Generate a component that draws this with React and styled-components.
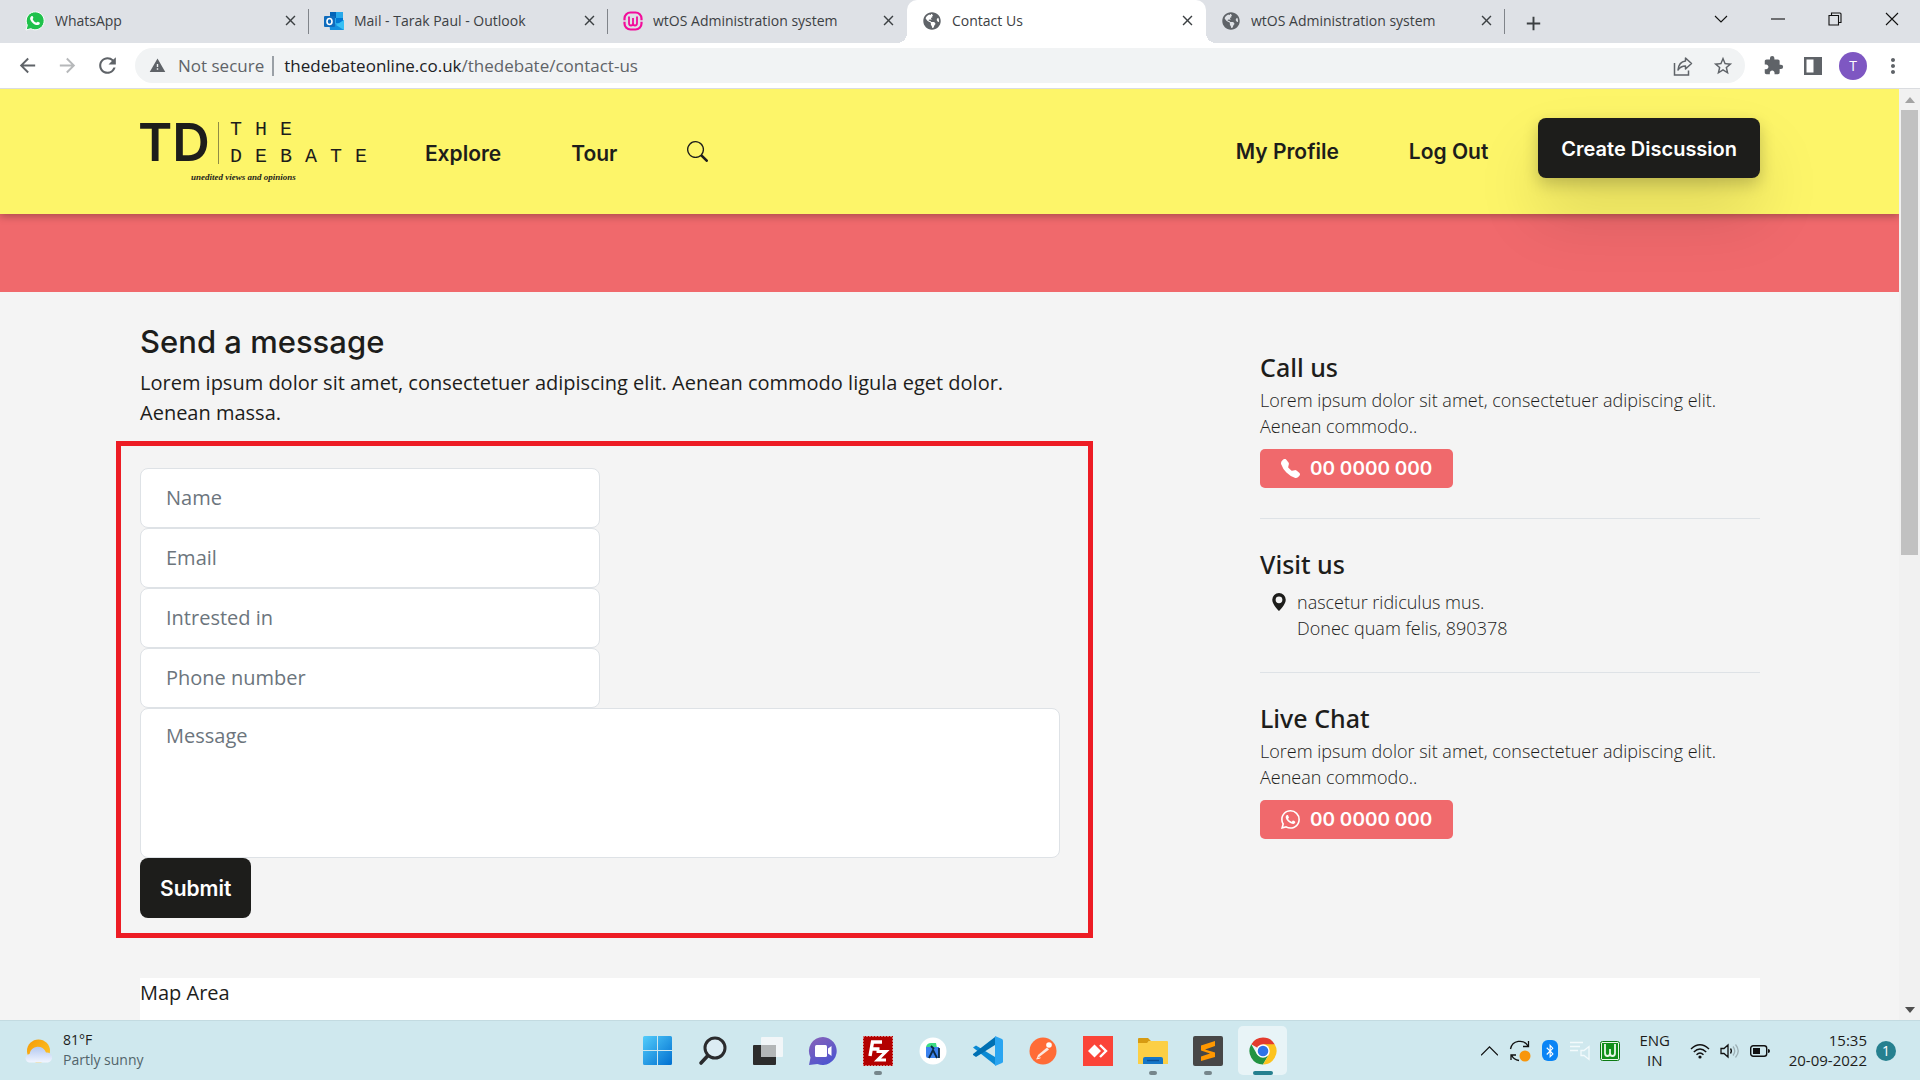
import React from "react";
import styled, { createGlobalStyle, css } from "styled-components";
import { BsSearch, BsTelephoneFill, BsGeoAltFill, BsWhatsapp } from "react-icons/bs";
import {
  MdArrowBack,
  MdArrowForward,
  MdRefresh,
  MdWarning,
  MdExtension,
  MdMoreVert,
  MdStarBorder,
  MdClose,
  MdAdd,
} from "react-icons/md";
import { FaBluetoothB, FaGlobeAmericas } from "react-icons/fa";

const ink = "#1d1d1b";
const coral = "#f0696c";
const lemon = "#fdf569";
const gray = "#f4f4f4";
const line = "#dee2e6";
const body = `"Open Sans", "Noto Sans", sans-serif`;
const display = `Inter, "Noto Sans", sans-serif`;

const GlobalStyle = createGlobalStyle`
  *, *::before, *::after { box-sizing: border-box; }
  body { margin: 0; overflow: hidden; font-family: ${body}; color: ${ink}; }
  h1, h2, p { margin: 0; }
  button { border: 0; background: none; padding: 0; font: inherit; color: inherit; cursor: pointer; }
  a { color: inherit; text-decoration: none; }
  svg { display: block; flex: none; }
`;

const Desktop = styled.div`
  display: flex;
  flex-direction: column;
  height: 100vh;
`;

/* ---------- browser frame ---------- */

const TabStrip = styled.div`
  display: flex;
  align-items: center;
  height: 43px;
  padding-left: 10px;
  background: #dee1e6;
`;

const Tab = styled.div`
  position: relative;
  display: flex;
  flex: 0 1 299px;
  align-items: center;
  min-width: 0;
  height: 43px;
  padding: 0 9px 2px 15px;
  font-size: 14px;
  color: #3c4043;

  ${(p) =>
    p.$divided &&
    css`
      &::after {
        content: "";
        position: absolute;
        top: 9px;
        right: 0;
        width: 1px;
        height: 25px;
        background: #80848a;
      }
    `}

  ${(p) =>
    p.$active &&
    css`
      background: #fff;
      border-radius: 10px 10px 0 0;
      &::before,
      &::after {
        content: "";
        position: absolute;
        bottom: 0;
        width: 10px;
        height: 10px;
      }
      &::before {
        left: -10px;
        background: radial-gradient(circle at 0 0, transparent 10px, #fff 10px);
      }
      &::after {
        right: -10px;
        background: radial-gradient(circle at 100% 0, transparent 10px, #fff 10px);
      }
    `}
`;

const TabIcon = styled.span`
  display: grid;
  place-items: center;
  width: 20px;
  height: 20px;
`;

const TabTitle = styled.span`
  flex: 1;
  margin-left: 10px;
  overflow: hidden;
  white-space: nowrap;
`;

const TabAction = styled.button`
  display: grid;
  place-items: center;
  width: 20px;
  height: 20px;
`;

const NewTab = styled(TabAction)`
  margin-left: 17px;
  color: #3c4043;
`;

const WindowControls = styled.div`
  display: flex;
  align-self: flex-start;
  margin-left: auto;
  height: 37px;
`;

const WindowButton = styled.button`
  display: grid;
  place-items: center;
  width: 57px;
`;

const Toolbar = styled.div`
  display: flex;
  align-items: center;
  height: 46px;
  padding: 0 7px;
  background: #fff;
  border-bottom: 1px solid #dadce0;
  color: #5f6368;
`;

const ToolButton = styled.button`
  display: grid;
  place-items: center;
  width: 40px;
  height: 34px;
  opacity: ${(p) => (p.$dim ? 0.45 : 1)};
`;

const AddressBar = styled.div`
  display: flex;
  flex: 1;
  align-items: center;
  height: 35px;
  margin: 0 8px;
  padding: 0 2px 0 14px;
  border-radius: 18px;
  background: #f1f3f4;
  font-size: 17px;
`;

const Security = styled.span`
  margin-left: 12px;
  padding-right: 8px;
  border-right: 2px solid #9aa0a6;
  line-height: 20px;
  white-space: nowrap;
`;

const Url = styled.span`
  flex: 1;
  margin-left: 10px;
  white-space: nowrap;
`;

const Host = styled.span`
  color: #202124;
`;

const Avatar = styled.span`
  display: grid;
  place-items: center;
  width: 28px;
  height: 28px;
  border-radius: 50%;
  background: #7e57c2;
  color: #fff;
  font-size: 14px;
`;

const Viewport = styled.div`
  display: flex;
  flex: 1;
  min-height: 0;
`;

const Page = styled.div`
  display: flex;
  flex: 1;
  flex-direction: column;
  min-width: 0;
  overflow: hidden;
  background: ${gray};
`;

const Scrollbar = styled.div`
  display: flex;
  flex: none;
  flex-direction: column;
  align-items: center;
  width: 21px;
  background: #f1f1f1;
`;

const ScrollArrow = styled.button`
  display: grid;
  place-items: center;
  width: 20px;
  height: 21px;
`;

const ScrollTrack = styled.div`
  flex: 1;
  width: 17px;
`;

const ScrollThumb = styled.div`
  height: 50%;
  background: #c1c1c1;
`;

/* ---------- site header ---------- */

const SiteHeader = styled.header`
  position: relative;
  z-index: 1;
  display: flex;
  justify-content: space-between;
  padding: 29px 139px 36px 138px;
  background: ${lemon};
  box-shadow: 0 2px 8px rgba(0, 0, 0, 0.3);
`;

const HeaderGroup = styled.nav`
  display: flex;
  align-items: flex-end;
  height: 60px;
  gap: 70px;
  font: 600 21px/${(p) => (p.$low ? 48 : 52)}px ${display};
`;

const Logo = styled.a`
  display: flex;
  flex-direction: column;
  align-self: flex-start;
  margin-right: -25px;
`;

const LogoRow = styled.span`
  display: flex;
  align-items: center;
  height: 50px;
`;

const Monogram = styled.span`
  font: 600 52px/50px ${display};
`;

const LogoRule = styled.span`
  width: 1px;
  height: 42px;
  margin: 0 11px 0 8px;
  background: #8f8b45;
`;

const LogoWords = styled.span`
  display: flex;
  flex-direction: column;
  font: 20px/27px "Liberation Mono", monospace;
  letter-spacing: 13px;
`;

const Tagline = styled.span`
  padding-left: 53px;
  font: italic 700 9px/18px "Liberation Serif", serif;
`;

const NavLink = styled.a`
  white-space: nowrap;
`;

const NavButton = styled.button`
  display: grid;
  place-items: center;
  height: 54px;
`;

const DarkButton = styled.button`
  height: 60px;
  padding: 2px ${(p) => (p.$wide ? 23 : 20)}px 0;
  border-radius: 8px;
  background: ${ink};
  color: #fff;
  font: 600 ${(p) => (p.$wide ? 20 : 21)}px/30px ${display};
  white-space: nowrap;
  ${(p) =>
    p.$wide &&
    css`
      margin-left: -20px;
      box-shadow: 0 6px 16px rgba(0, 0, 0, 0.2), 0 36px 64px rgba(0, 0, 0, 0.13);
    `}
`;

const Banner = styled.div`
  flex: none;
  height: 78px;
  background: ${coral};
`;

/* ---------- contact page ---------- */

const Contact = styled.main`
  display: grid;
  grid-template-columns: 46fr 25fr;
  column-gap: 200px;
  align-items: start;
  padding: 31px 139px 40px 140px;
`;

const Title = styled.h1`
  font: 500 31px/38px ${display};
`;

const Lead = styled.p`
  margin-top: 7px;
  font-size: 20px;
  line-height: 30px;
`;

const Form = styled.form`
  display: flex;
  flex-direction: column;
  align-items: flex-start;
  margin: 13px -33px 0 -24px;
  padding: 22px 28px 15px 19px;
  border: 5px solid #ed1c24;
`;

const fieldStyle = css`
  display: block;
  border: 1px solid ${line};
  border-radius: 8px;
  background: #fff;
  color: ${ink};
  font: 20px/30px ${body};
  outline: 0;
  &::placeholder {
    color: #6c757d;
    opacity: 1;
  }
`;

const Field = styled.input`
  ${fieldStyle}
  width: 50%;
  height: 60px;
  padding: 0 25px 2px;
`;

const MessageField = styled.textarea`
  ${fieldStyle}
  width: 100%;
  height: 150px;
  padding: 12px 25px;
  resize: none;
`;

const Sidebar = styled.aside`
  padding-top: 30px;
`;

const Block = styled.section`
  padding-bottom: 30px;
  & + & {
    padding-top: 31px;
    border-top: 1px solid ${line};
  }
`;

const BlockTitle = styled.h2`
  font: 500 25px/28px "Noto Sans", sans-serif;
`;

const BlockText = styled.p`
  margin-top: 6px;
  font-size: 18px;
  font-weight: 300;
  line-height: 26px;
`;

const Address = styled.address`
  display: flex;
  gap: 9px;
  padding: 11px 0 1px 10px;
  font: 300 18px/26px ${body};
  svg {
    margin-top: 4px;
  }
`;

const PhoneLink = styled.a`
  display: inline-flex;
  align-items: center;
  gap: 10px;
  height: 39px;
  margin-top: 10px;
  padding: 0 21px;
  border-radius: 5px;
  background: ${coral};
  color: #fff;
  font: 600 19px/39px ${display};
  vertical-align: top;
`;

const MapArea = styled.section`
  flex: 1;
  margin: 0 139px 0 140px;
  background: #fff;
  font-size: 20px;
  line-height: 30px;
`;

/* ---------- taskbar ---------- */

const Taskbar = styled.footer`
  display: grid;
  flex: none;
  grid-template-columns: 1fr auto 1fr;
  align-items: center;
  height: 60px;
  background: #cfe8ee;
  border-top: 1px solid #c3dbe1;
  font-size: 15px;
  line-height: 20px;
`;

const Weather = styled.button`
  display: flex;
  align-items: center;
  justify-self: start;
  gap: 10px;
  padding-left: 25px;
  font-size: 14px;
  text-align: left;
`;

const Stack = styled.span`
  display: flex;
  flex-direction: column;
  padding-bottom: 2px;
  text-align: ${(p) => p.$align || "left"};
  white-space: nowrap;
`;

const Muted = styled.span`
  color: #52646a;
`;

const Apps = styled.div`
  display: flex;
  gap: 6px;
`;

const AppButton = styled.button`
  position: relative;
  display: grid;
  place-items: center;
  width: 49px;
  height: 49px;
  border-radius: 5px;
  background: ${(p) => (p.$state === "active" ? "#e8f4f7" : "transparent")};
  ${(p) =>
    p.$state &&
    css`
      &::after {
        content: "";
        position: absolute;
        bottom: 0;
        width: ${p.$state === "active" ? 20 : 8}px;
        height: 4px;
        border-radius: 2px;
        background: ${p.$state === "active" ? "#26808f" : "#76868b"};
      }
    `}
`;

const Tray = styled.div`
  display: flex;
  align-items: center;
  justify-self: end;
  padding-right: 24px;
`;

const TrayButton = styled.button`
  display: grid;
  place-items: center;
  width: 30px;
  height: 40px;
`;

const Language = styled.button`
  width: 60px;
`;

const Clock = styled.button`
  margin: 0 9px 0 14px;
`;

const Badge = styled.span`
  display: grid;
  place-items: center;
  width: 20px;
  height: 20px;
  border-radius: 50%;
  background: #26808f;
  color: #fff;
  font-size: 14px;
`;

/* ---------- drawings ---------- */

const WhatsAppIcon = () => (
  <svg width="20" height="20" viewBox="0 0 20 20">
    <path d="M1 19l1.300-4.800A9 9 0 1 1 5.800 17.700z" fill="#1fc14b" stroke="#fff" strokeWidth="1" />
    <path d="M6.300 5.300c1-.8 1.600-.2 2 1.300.3.900-.8 1.100-.5 1.800.8 1.600 1.900 2.600 3.500 3.200.7.200 1-1.200 1.700-.9 1.300.5 2.200 1 1.700 2-1 1.800-3 1.600-5 .7-2-1-3.700-2.800-4.400-4.900-.4-1.400-.1-2.400 1-3.200z" fill="#fff" />
  </svg>
);

const OutlookIcon = () => (
  <svg width="20" height="20" viewBox="0 0 20 20">
    <path d="M6 1h13v13H6z" fill="#28a8ea" />
    <path d="M6 1h6v6H6z" fill="#0364b8" />
    <path d="M12 7h7v5h-7z" fill="#0078d4" />
    <path d="M5 10l8 4 7-5v10H6z" fill="#1490df" />
    <path d="M12 14l8-5v10z" fill="#37c0f5" />
    <rect x="0" y="5" width="11" height="11" rx="1" fill="#0f6cbd" />
    <ellipse cx="5.500" cy="10.500" rx="2.500" ry="3" fill="none" stroke="#fff" strokeWidth="1.600" />
  </svg>
);

const WampIcon = () => (
  <svg width="20" height="20" viewBox="0 0 20 20" fill="none" stroke="#f20d9b">
    <rect x="1.500" y="1.500" width="17" height="17" rx="6" strokeWidth="2.200" />
    <path d="M6 5.500V12q0 2.500 2 2.500t2-2.500V7v5q0 2.500 2 2.500t2-2.500V5.500" strokeWidth="1.800" />
    <path d="M0 10h3.500M16.500 10H20" stroke="#dee1e6" strokeWidth="1.500" />
  </svg>
);

const ShareIcon = () => (
  <svg width="20" height="20" viewBox="0 0 20 20" fill="none" stroke="#5f6368" strokeWidth="1.500">
    <path d="M1.500 7v12h14v-4.500" />
    <path d="M12.500 2l6 5.500-6 5.500v-3c-3 0-5.500 1-7.500 4C5.500 9 8.500 5.500 12.500 5z" strokeLinejoin="round" />
  </svg>
);

const PanelIcon = () => (
  <svg width="20" height="20" viewBox="0 0 20 20">
    <path d="M1 1h18v18H1zM3.500 3.500v13h7v-13z" fill="#5f6368" fillRule="evenodd" />
  </svg>
);

const Glyph = ({ d, size = 14 }) => (
  <svg width={size} height={size} viewBox="0 0 14 14" fill="none" stroke="#111" strokeWidth="1.100">
    <path d={d} />
  </svg>
);

const WeatherIcon = () => (
  <svg width="28" height="26" viewBox="0 0 28 26">
    <defs>
      <linearGradient id="sun" x1="0" y1="0" x2="1" y2="1">
        <stop offset="0" stopColor="#f59a07" />
        <stop offset="1" stopColor="#ffc928" />
      </linearGradient>
      <linearGradient id="cloud" x1="0" y1="0" x2="0" y2="1">
        <stop offset="0" stopColor="#b3c8f0" />
        <stop offset="1" stopColor="#f2f6ff" />
      </linearGradient>
    </defs>
    <circle cx="13.500" cy="13" r="11.500" fill="url(#sun)" />
    <path d="M5 24.500a4 4 0 0 1-.5-8.500A8.500 8.500 0 0 1 21 14.500a5 5 0 0 1 2 10z" fill="url(#cloud)" />
  </svg>
);

const WindowsIcon = () => (
  <svg width="30" height="30" viewBox="0 0 30 30">
    <defs>
      <linearGradient id="win" x1="0" y1="0" x2="1" y2="1">
        <stop offset="0" stopColor="#53cdfb" />
        <stop offset="1" stopColor="#006fd0" />
      </linearGradient>
    </defs>
    <path d="M1.500 0H14v14H0V1.500Q0 0 1.500 0zM15 0h12.500Q29 0 29 1.500V14H15zM0 15h14v14H1.500Q0 29 0 27.500zM15 15h14v12.500q0 1.500-1.500 1.500H15z" fill="url(#win)" />
  </svg>
);

const FinderIcon = () => (
  <svg width="30" height="30" viewBox="0 0 30 30" fill="none" stroke="#2a2b2d" strokeLinecap="round">
    <circle cx="17" cy="12" r="10" strokeWidth="3" fill="#dcecf3" />
    <path d="M9.500 20L3 27" strokeWidth="3.600" />
  </svg>
);

const TaskViewIcon = () => (
  <svg width="30" height="30" viewBox="0 0 30 30">
    <rect x="0" y="9" width="23" height="20" rx="1" fill="#2c2c2c" />
    <rect x="8" y="1" width="22" height="20" rx="1" fill="#f5f7f8" opacity=".9" />
    <path d="M8 9h15v12H8z" fill="#b3b6b7" />
  </svg>
);

const ChatIcon = () => (
  <svg width="30" height="30" viewBox="0 0 30 30">
    <defs>
      <linearGradient id="chat" x1="0" y1="0" x2="0.600" y2="1">
        <stop offset="0" stopColor="#8a63b8" />
        <stop offset="1" stopColor="#4f55cf" />
      </linearGradient>
    </defs>
    <path d="M15 1a14 14 0 1 1-5.500 27L1 29l1.500-7.500A14 14 0 0 1 15 1z" fill="url(#chat)" />
    <rect x="7" y="9" width="12" height="12" rx="1.500" fill="#fff" />
    <path d="M20 12.500l3.500-2.500v10L20 17.500z" fill="#fff" />
  </svg>
);

const FileZillaIcon = () => (
  <svg width="30" height="30" viewBox="0 0 30 30">
    <rect width="30" height="30" fill="#b30000" />
    <rect x=".5" y=".5" width="29" height="29" fill="none" stroke="#fbe3e3" strokeDasharray="1 2" />
    <path d="M7 20L9.500 6H19M9 13h7.500" fill="none" stroke="#fff" strokeWidth="3.400" />
    <path d="M13.500 15.500H23L14.500 24H23" fill="none" stroke="#fff" strokeWidth="3" />
  </svg>
);

const AndroidStudioIcon = () => (
  <svg width="28" height="28" viewBox="0 0 28 28">
    <circle cx="14" cy="14" r="13.500" fill="#fff" />
    <path d="M7 10q1-4 5-4h5l1 5-8 1z" fill="#3ddc84" />
    <path d="M7 10h13v11H9q-2 0-2-2z" fill="#3b82ee" />
    <path d="M10 21l4-8 4 8M20 11v10M12 9l3 3" fill="none" stroke="#0b2a45" strokeWidth="1.800" />
  </svg>
);

const VsCodeIcon = () => (
  <svg width="30" height="30" viewBox="0 0 30 30">
    <path d="M3 9.500L0 11.500 22 29v-8z" fill="#0b8ad4" />
    <path d="M3 21l-3-2v-1L22 1v8z" fill="#0070b3" />
    <path d="M22 0l7 3q1 .5 1 1.500v21q0 1-1 1.500l-7 3z" fill="#2aa5f1" />
  </svg>
);

const PostmanIcon = () => (
  <svg width="28" height="28" viewBox="0 0 28 28">
    <circle cx="14" cy="14" r="13.500" fill="#ff6c37" />
    <circle cx="20" cy="8" r="2.800" fill="#fff" />
    <path d="M18 10.500l2 2-8.500 6.500-4 3 1.500-4z" fill="#fbe7df" />
    <path d="M7.500 22l4-1.200" stroke="#fff" strokeWidth="1" />
  </svg>
);

const AnyDeskIcon = () => (
  <svg width="30" height="30" viewBox="0 0 30 30">
    <rect width="30" height="30" fill="#fb4438" />
    <path d="M11.500 8.500L18 15l-6.500 6.500L5 15z" fill="#fff" />
    <path d="M17 9l6 6-6 6" fill="none" stroke="#fff" strokeWidth="2.400" />
  </svg>
);

const ExplorerIcon = () => (
  <svg width="30" height="28" viewBox="0 0 30 28">
    <path d="M0 2q0-1 1-1h9l3 3h-2l-2 3H0z" fill="#d79b12" />
    <path d="M0 6h9l2-2h18q1 0 1 1v22H0z" fill="#fccf45" />
    <path d="M5 27v-5q0-2 2-2h16q2 0 2 2v5z" fill="#1576c8" />
    <path d="M9 23.500h12" stroke="#0b4f94" strokeWidth="1.400" />
  </svg>
);

const SublimeIcon = () => (
  <svg width="30" height="30" viewBox="0 0 30 30">
    <rect width="30" height="30" rx="2" fill="#474747" />
    <path d="M22 5v5l-10 3.500 10 3V21L8 25v-4.500l9-3-9-3V9.500z" fill="#ff9800" />
  </svg>
);

const ChromeIcon = () => (
  <svg width="28" height="28" viewBox="0 0 28 28">
    <path d="M14 14L2.300 7.250A13.500 13.500 0 0 1 25.700 7.250z" fill="#e33b2e" />
    <path d="M14 27.500A13.500 13.500 0 0 1 2.300 7.250L8.150 17.400l11.700 0z" fill="#229342" />
    <path d="M19.850 17.400L14 27.500a13.500 13.500 0 0 0 11.700-20.250H14z" fill="#fcc31e" />
    <circle cx="14" cy="14" r="6.750" fill="#fff" />
    <circle cx="14" cy="14" r="5.300" fill="#2d73e8" />
  </svg>
);

const SyncIcon = () => (
  <svg width="22" height="22" viewBox="0 0 22 22" fill="none" stroke="#111" strokeWidth="1.300">
    <path d="M1.500 9A9.500 9.500 0 0 1 19 6M19.500 1v5.500H14M10 20.500A9.500 9.500 0 0 1 2.500 15M2 20v-5h5" />
    <circle cx="16" cy="16" r="5.500" fill="#f8960c" stroke="none" />
  </svg>
);

const BluetoothPill = styled.span`
  display: grid;
  place-items: center;
  width: 16px;
  height: 21px;
  border-radius: 6px;
  background: #0a84f5;
  color: #fff;
`;

const MutedSpeakerIcon = () => (
  <svg width="20" height="20" viewBox="0 0 20 20" fill="none" stroke="#f3fafc" strokeWidth="1.300">
    <path d="M0 1.500h13M0 5.500h10M0 9.500h8M11 9.500h3l5-4v13l-5-4h-3z" />
  </svg>
);

const WampTrayIcon = () => (
  <svg width="20" height="20" viewBox="0 0 20 20">
    <rect x=".5" y=".5" width="19" height="19" rx="2" fill="#e9f8e9" stroke="#0c7a13" />
    <path d="M2 2h16v16H2z" fill="#12901a" />
    <path d="M5 3v9q0 3 2.500 3T10 12V8v4q0 3 2.500 3t2.500-3V3" fill="none" stroke="#e9f8e9" strokeWidth="1.800" />
  </svg>
);

const WifiIcon = () => (
  <svg width="20" height="16" viewBox="0 0 20 16" fill="none" stroke="#111" strokeWidth="1.400">
    <path d="M1 6Q10-2.500 19 6M3.800 9q6.200-6 12.400 0M6.500 11.800q3.500-3.500 7 0" />
    <circle cx="10" cy="14" r="1.600" fill="#111" stroke="none" />
  </svg>
);

const VolumeIcon = () => (
  <svg width="20" height="16" viewBox="0 0 20 16" fill="none" stroke="#111" strokeWidth="1.300">
    <path d="M1 5.500h3L8 2v12l-4-3.500H1zM10.500 5.500q1.800 2.500 0 5" />
    <path d="M13 3.500q3.500 4.500 0 9M15.500 1.500q5.500 6.500 0 13" stroke="#9db0b5" />
  </svg>
);

const BatteryIcon = () => (
  <svg width="20" height="14" viewBox="0 0 20 14">
    <rect x=".7" y="1.700" width="16" height="10.600" rx="2.500" fill="none" stroke="#111" strokeWidth="1.400" />
    <rect x="3" y="4" width="7" height="6" fill="#111" />
    <path d="M18 5q2 0 2 2t-2 2z" fill="#111" />
  </svg>
);

/* ---------- content ---------- */

const tabs = [
  { title: "WhatsApp", icon: <WhatsAppIcon />, divided: true },
  { title: "Mail - Tarak Paul - Outlook", icon: <OutlookIcon />, divided: true },
  { title: "wtOS Administration system", icon: <WampIcon /> },
  { title: "Contact Us", icon: <FaGlobeAmericas size={18} color="#5f6368" />, active: true },
  { title: "wtOS Administration system", icon: <FaGlobeAmericas size={18} color="#5f6368" />, divided: true },
];

const windowButtons = [
  ["Search tabs", "M1 4l6 6 6-6"],
  ["Minimize", "M0 7h14"],
  ["Restore", "M1 3.500h9.500V13H1zM3.500 3.500V1H12q1 0 1 1v8.500h-2.500"],
  ["Close", "M1 1l12 12M13 1L1 13"],
];

const fields = [
  { id: "name", label: "Name", type: "text" },
  { id: "email", label: "Email", type: "email" },
  { id: "interest", label: "Intrested in", type: "text" },
  { id: "phone", label: "Phone number", type: "tel" },
];

const apps = [
  ["Start", WindowsIcon],
  ["Search", FinderIcon],
  ["Task View", TaskViewIcon],
  ["Chat", ChatIcon],
  ["FileZilla", FileZillaIcon, "open"],
  ["Android Studio", AndroidStudioIcon],
  ["Visual Studio Code", VsCodeIcon],
  ["Postman", PostmanIcon],
  ["AnyDesk", AnyDeskIcon],
  ["File Explorer", ExplorerIcon, "open"],
  ["Sublime Text", SublimeIcon, "open"],
  ["Google Chrome", ChromeIcon, "active"],
];

function BrowserFrame() {
  return (
    <>
      <TabStrip>
        {tabs.map((tab, i) => (
          <Tab key={i} $active={tab.active} $divided={tab.divided}>
            <TabIcon>{tab.icon}</TabIcon>
            <TabTitle>{tab.title}</TabTitle>
            <TabAction aria-label={`Close ${tab.title}`}>
              <MdClose size={17} />
            </TabAction>
          </Tab>
        ))}
        <NewTab aria-label="New tab">
          <MdAdd size={23} />
        </NewTab>
        <WindowControls>
          {windowButtons.map(([label, d]) => (
            <WindowButton key={label} aria-label={label}>
              <Glyph d={d} />
            </WindowButton>
          ))}
        </WindowControls>
      </TabStrip>
      <Toolbar>
        <ToolButton aria-label="Back"><MdArrowBack size={23} /></ToolButton>
        <ToolButton aria-label="Forward" $dim><MdArrowForward size={23} /></ToolButton>
        <ToolButton aria-label="Reload"><MdRefresh size={25} /></ToolButton>
        <AddressBar>
          <MdWarning size={17} />
          <Security>Not secure</Security>
          <Url><Host>thedebateonline.co.uk</Host>/thedebate/contact-us</Url>
          <ToolButton aria-label="Share"><ShareIcon /></ToolButton>
          <ToolButton aria-label="Bookmark"><MdStarBorder size={22} /></ToolButton>
        </AddressBar>
        <ToolButton aria-label="Extensions"><MdExtension size={21} /></ToolButton>
        <ToolButton aria-label="Side panel"><PanelIcon /></ToolButton>
        <ToolButton aria-label="Profile"><Avatar>T</Avatar></ToolButton>
        <ToolButton aria-label="Menu"><MdMoreVert size={24} /></ToolButton>
      </Toolbar>
    </>
  );
}

function Header() {
  return (
    <SiteHeader>
      <HeaderGroup $low>
        <Logo href="#home">
          <LogoRow>
            <Monogram>TD</Monogram>
            <LogoRule />
            <LogoWords>
              <span>THE</span>
              <span>DEBATE</span>
            </LogoWords>
          </LogoRow>
          <Tagline>unedited views and opinions</Tagline>
        </Logo>
        <NavLink href="#explore">Explore</NavLink>
        <NavLink href="#tour">Tour</NavLink>
        <NavButton aria-label="Search"><BsSearch size={21} /></NavButton>
      </HeaderGroup>
      <HeaderGroup>
        <NavLink href="#profile">My Profile</NavLink>
        <NavLink href="#logout">Log Out</NavLink>
        <DarkButton $wide>Create Discussion</DarkButton>
      </HeaderGroup>
    </SiteHeader>
  );
}

function ContactForm() {
  return (
    <Form onSubmit={(e) => e.preventDefault()}>
      {fields.map((f) => (
        <Field key={f.id} id={f.id} type={f.type} placeholder={f.label} aria-label={f.label} />
      ))}
      <MessageField id="message" placeholder="Message" aria-label="Message" />
      <DarkButton type="submit">Submit</DarkButton>
    </Form>
  );
}

function ContactDetails() {
  return (
    <Sidebar>
      <Block>
        <BlockTitle>Call us</BlockTitle>
        <BlockText>Lorem ipsum dolor sit amet, consectetuer adipiscing elit. Aenean commodo..</BlockText>
        <PhoneLink href="tel:000000000"><BsTelephoneFill size={19} />00 0000 000</PhoneLink>
      </Block>
      <Block>
        <BlockTitle>Visit us</BlockTitle>
        <Address>
          <BsGeoAltFill size={18} />
          <span>nascetur ridiculus mus.<br />Donec quam felis, 890378</span>
        </Address>
      </Block>
      <Block>
        <BlockTitle>Live Chat</BlockTitle>
        <BlockText>Lorem ipsum dolor sit amet, consectetuer adipiscing elit. Aenean commodo..</BlockText>
        <PhoneLink href="#chat"><BsWhatsapp size={19} />00 0000 000</PhoneLink>
      </Block>
    </Sidebar>
  );
}

function SystemTaskbar() {
  return (
    <Taskbar>
      <Weather>
        <WeatherIcon />
        <Stack>
          <span>81°F</span>
          <Muted>Partly sunny</Muted>
        </Stack>
      </Weather>
      <Apps>
        {apps.map(([label, Icon, state]) => (
          <AppButton key={label} aria-label={label} $state={state}>
            <Icon />
          </AppButton>
        ))}
      </Apps>
      <Tray>
        <TrayButton aria-label="Hidden icons"><Glyph d="M0 11l7-7 7 7" size={17} /></TrayButton>
        <TrayButton aria-label="Updates"><SyncIcon /></TrayButton>
        <TrayButton aria-label="Bluetooth"><BluetoothPill><FaBluetoothB size={14} /></BluetoothPill></TrayButton>
        <TrayButton aria-label="Audio manager"><MutedSpeakerIcon /></TrayButton>
        <TrayButton aria-label="Server"><WampTrayIcon /></TrayButton>
        <Language><Stack $align="center"><span>ENG</span><span>IN</span></Stack></Language>
        <TrayButton aria-label="Wi-Fi"><WifiIcon /></TrayButton>
        <TrayButton aria-label="Volume"><VolumeIcon /></TrayButton>
        <TrayButton aria-label="Battery"><BatteryIcon /></TrayButton>
        <Clock><Stack $align="right"><span>15:35</span><span>20-09-2022</span></Stack></Clock>
        <Badge>1</Badge>
      </Tray>
    </Taskbar>
  );
}

export default function App() {
  return (
    <Desktop>
      <GlobalStyle />
      <BrowserFrame />
      <Viewport>
        <Page>
          <Header />
          <Banner />
          <Contact>
            <div>
              <Title>Send a message</Title>
              <Lead>
                Lorem ipsum dolor sit amet, consectetuer adipiscing elit. Aenean commodo ligula eget dolor. Aenean massa.
              </Lead>
              <ContactForm />
            </div>
            <ContactDetails />
          </Contact>
          <MapArea>Map Area</MapArea>
        </Page>
        <Scrollbar>
          <ScrollArrow aria-label="Scroll up">
            <svg width="10" height="6"><path d="M0 6l5-6 5 6z" fill="#a3a3a3" /></svg>
          </ScrollArrow>
          <ScrollTrack><ScrollThumb /></ScrollTrack>
          <ScrollArrow aria-label="Scroll down">
            <svg width="10" height="6"><path d="M0 0l5 6 5-6z" fill="#505050" /></svg>
          </ScrollArrow>
        </Scrollbar>
      </Viewport>
      <SystemTaskbar />
    </Desktop>
  );
}
